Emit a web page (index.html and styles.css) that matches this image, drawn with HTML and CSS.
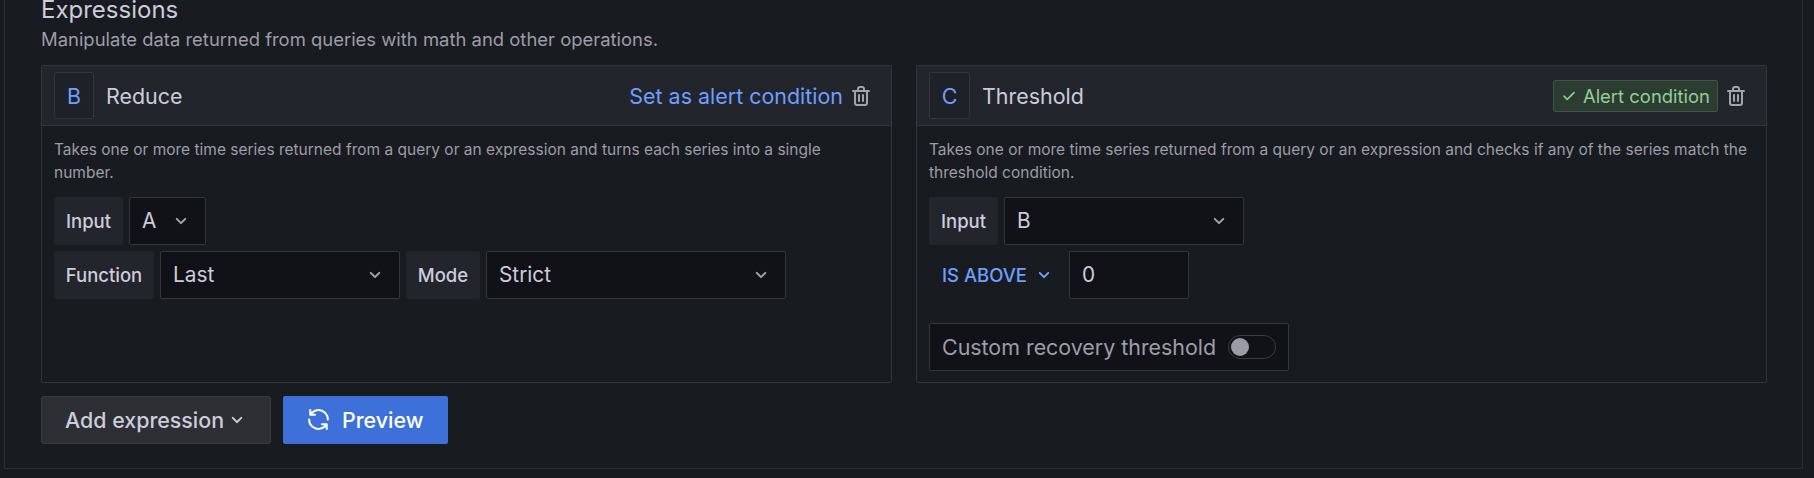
FILE: index.html
```html
<!DOCTYPE html>
<html lang="en">
<head>
<meta charset="utf-8">
<title>Expressions</title>
<link rel="stylesheet" href="styles.css">
</head>
<body>
<main class="section">
  <h2 class="title">Expressions</h2>
  <p class="subtitle">Manipulate data returned from queries with math and other operations.</p>
  <div class="cards">
    <section class="card">
      <header class="card-head">
        <span class="ref">B</span>
        <span class="name">Reduce</span>
        <span class="set-alert">Set as alert condition</span>
        <svg class="trash" viewBox="0 0 24 24"><path d="M10,18a1,1,0,0,0,1-1V11a1,1,0,0,0-2,0v6A1,1,0,0,0,10,18ZM20,6H16V5a3,3,0,0,0-3-3H11A3,3,0,0,0,8,5V6H4A1,1,0,0,0,4,8H5V19a3,3,0,0,0,3,3h8a3,3,0,0,0,3-3V8h1a1,1,0,0,0,0-2ZM10,5a1,1,0,0,1,1-1h2a1,1,0,0,1,1,1V6H10Zm7,14a1,1,0,0,1-1,1H8a1,1,0,0,1-1-1V8H17Zm-3-1a1,1,0,0,0,1-1V11a1,1,0,0,0-2,0v6A1,1,0,0,0,14,18Z"/></svg>
      </header>
      <div class="card-body">
        <p class="desc">Takes one or more time series returned from a query or an expression and turns each series into a single number.</p>
        <div class="row">
          <span class="label w-input">Input</span>
          <span class="select w-a">A<svg class="chev" viewBox="0 0 24 24"><path d="M17,9.17a1,1,0,0,0-1.41,0L12,12.71,8.46,9.17a1,1,0,0,0-1.41,0,1,1,0,0,0,0,1.42l4.24,4.24a1,1,0,0,0,1.42,0L17,10.59A1,1,0,0,0,17,9.17Z"/></svg></span>
        </div>
        <div class="row">
          <span class="label w-function">Function</span>
          <span class="select w-last">Last<svg class="chev" viewBox="0 0 24 24"><path d="M17,9.17a1,1,0,0,0-1.41,0L12,12.71,8.46,9.17a1,1,0,0,0-1.41,0,1,1,0,0,0,0,1.42l4.24,4.24a1,1,0,0,0,1.42,0L17,10.59A1,1,0,0,0,17,9.17Z"/></svg></span>
          <span class="label w-mode">Mode</span>
          <span class="select w-strict">Strict<svg class="chev" viewBox="0 0 24 24"><path d="M17,9.17a1,1,0,0,0-1.41,0L12,12.71,8.46,9.17a1,1,0,0,0-1.41,0,1,1,0,0,0,0,1.42l4.24,4.24a1,1,0,0,0,1.42,0L17,10.59A1,1,0,0,0,17,9.17Z"/></svg></span>
        </div>
      </div>
    </section>
    <section class="card">
      <header class="card-head">
        <span class="ref ref-wide">C</span>
        <span class="name">Threshold</span>
        <span class="badge"><svg class="check" viewBox="0 0 24 24"><path d="M18.71,7.21a1,1,0,0,0-1.42,0L9.84,14.67,6.71,11.53A1,1,0,1,0,5.29,13l3.84,3.84a1,1,0,0,0,1.42,0l8.16-8.16A1,1,0,0,0,18.71,7.21Z"/></svg>Alert condition</span>
        <svg class="trash" viewBox="0 0 24 24"><path d="M10,18a1,1,0,0,0,1-1V11a1,1,0,0,0-2,0v6A1,1,0,0,0,10,18ZM20,6H16V5a3,3,0,0,0-3-3H11A3,3,0,0,0,8,5V6H4A1,1,0,0,0,4,8H5V19a3,3,0,0,0,3,3h8a3,3,0,0,0,3-3V8h1a1,1,0,0,0,0-2ZM10,5a1,1,0,0,1,1-1h2a1,1,0,0,1,1,1V6H10Zm7,14a1,1,0,0,1-1,1H8a1,1,0,0,1-1-1V8H17Zm-3-1a1,1,0,0,0,1-1V11a1,1,0,0,0-2,0v6A1,1,0,0,0,14,18Z"/></svg>
      </header>
      <div class="card-body">
        <p class="desc">Takes one or more time series returned from a query or an expression and checks if any of the series match the threshold condition.</p>
        <div class="row">
          <span class="label w-input">Input</span>
          <span class="select w-b">B<svg class="chev" viewBox="0 0 24 24"><path d="M17,9.17a1,1,0,0,0-1.41,0L12,12.71,8.46,9.17a1,1,0,0,0-1.41,0,1,1,0,0,0,0,1.42l4.24,4.24a1,1,0,0,0,1.42,0L17,10.59A1,1,0,0,0,17,9.17Z"/></svg></span>
        </div>
        <div class="row">
          <span class="operator">IS ABOVE<svg class="chev chev-blue" viewBox="0 0 24 24"><path d="M17,9.17a1,1,0,0,0-1.41,0L12,12.71,8.46,9.17a1,1,0,0,0-1.41,0,1,1,0,0,0,0,1.42l4.24,4.24a1,1,0,0,0,1.42,0L17,10.59A1,1,0,0,0,17,9.17Z"/></svg></span>
          <span class="select w-num">0</span>
        </div>
        <div class="recovery">
          <span class="recovery-text">Custom recovery threshold</span>
          <span class="toggle"><span class="knob"></span></span>
        </div>
      </div>
    </section>
  </div>
  <div class="actions">
    <span class="btn btn-secondary">Add expression<svg class="chev chev-btn" viewBox="0 0 24 24"><path d="M17,9.17a1,1,0,0,0-1.41,0L12,12.71,8.46,9.17a1,1,0,0,0-1.41,0,1,1,0,0,0,0,1.42l4.24,4.24a1,1,0,0,0,1.42,0L17,10.59A1,1,0,0,0,17,9.17Z"/></svg></span>
    <span class="btn btn-primary"><svg class="sync" viewBox="0 0 24 24"><path d="M19.91,15.51H15.38a1,1,0,0,0,0,2h2.4A8,8,0,0,1,4,12a1,1,0,0,0-2,0,10,10,0,0,0,16.88,7.23V21a1,1,0,0,0,2,0V16.5A1,1,0,0,0,19.91,15.51ZM12,2A10,10,0,0,0,5.12,4.77V3a1,1,0,0,0-2,0V7.5a1,1,0,0,0,1,1h4.5a1,1,0,0,0,0-2H6.22A8,8,0,0,1,20,12a1,1,0,0,0,2,0A10,10,0,0,0,12,2Z"/></svg>Preview</span>
  </div>
</main>
</body>
</html>
```
FILE: styles.css
```css
* { box-sizing: border-box; }
html, body { margin: 0; height: 478px; overflow: hidden; }
body {
  background: #181b1f;
  color: #ccccdc;
  font-family: Inter, "Liberation Sans", sans-serif;
  font-size: 18.5px;
}
.section {
  margin-left: 4px;
  width: 1799px;
  height: 469px;
  padding: 0 0 0 36px;
  border: 1px solid #2c2f35;
  border-top: 0;
  border-radius: 0 0 2px 2px;
}
.title {
  margin: 0;
  font-size: 24px;
  font-weight: 400;
  line-height: 20px;
  height: 28px;
}
.subtitle {
  margin: 0;
  height: 37px;
  font-size: 18.45px;
  line-height: 22px;
  color: #9d9da8;
}
.cards { display: flex; gap: 24px; }
.card {
  width: 851px;
  height: 318px;
  border: 1px solid #33363c;
  border-radius: 2px;
}
.card-head {
  display: flex;
  align-items: center;
  height: 60px;
  padding: 0 12px;
  background: #22252b;
  border-bottom: 1px solid #33363c;
  font-size: 21.45px;
}
.ref {
  width: 40px;
  height: 47px;
  display: flex;
  align-items: center;
  justify-content: center;
  margin-right: 12px;
  border: 1px solid #33363c;
  border-radius: 2px;
  background: #1e2127;
  color: #6e9fff;
}
.ref-wide { width: 41px; }
.name { flex: 1; }
.set-alert { color: #6e9fff; }
.trash {
  width: 24px;
  height: 24px;
  margin: 0 6px;
  fill: #a3a3ae;
}
.badge {
  display: flex;
  align-items: center;
  height: 32px;
  padding: 0 7px 0 5px;
  border: 1px solid #3c5740;
  border-radius: 2px;
  background: #2d3c32;
  color: #8fd092;
  font-size: 18.45px;
}
.check {
  width: 20px;
  height: 20px;
  margin-right: 4px;
  fill: #8fd092;
}
.card-body { padding: 12px; }
.desc {
  margin: 0 0 13px;
  font-size: 15.5px;
  line-height: 23px;
  color: #9d9da8;
}
.row { display: flex; gap: 6px; margin-bottom: 6px; height: 48px; }
.label {
  display: flex;
  align-items: center;
  justify-content: center;
  padding-bottom: 1px;
  background: #22252b;
  border-radius: 2px;
  font-size: 18.5px;
  font-weight: 500;
}
.w-input { width: 69px; }
.w-function { width: 100px; }
.w-mode { width: 74px; }
.select {
  display: flex;
  align-items: center;
  justify-content: space-between;
  padding: 0 12px 1px;
  background: #111217;
  border: 1px solid #33363c;
  border-radius: 2px;
  font-size: 20.8px;
}
.w-a { width: 77px; }
.w-b { width: 240px; }
.w-last { width: 240px; }
.w-strict { width: 300px; }
.w-num { width: 120px; }
.chev {
  width: 24px;
  height: 24px;
  fill: #a3a3ae;
}
.operator {
  display: flex;
  align-items: center;
  width: 134px;
  padding: 0 0 1px 13px;
  color: #6e9fff;
  font-size: 18.5px;
  font-weight: 500;
}
.chev-blue { fill: #6e9fff; margin-left: 5px; }
.recovery {
  display: flex;
  align-items: center;
  width: 360px;
  height: 48px;
  margin-top: 24px;
  padding: 0 12px 1px;
  background: #111217;
  border: 1px solid #33363c;
  border-radius: 2px;
  color: #9d9da8;
  font-size: 21.4px;
}
.recovery-text { flex: 1; white-space: nowrap; }
.toggle {
  display: flex;
  flex: none;
  align-items: center;
  width: 48px;
  height: 24px;
  margin-left: 12px;
  padding-left: 2px;
  border: 1px solid #3a3d43;
  border-radius: 12px;
}
.knob { width: 18px; height: 18px; border-radius: 50%; background: #9b9ba6; }
.actions { display: flex; gap: 12px; margin-top: 13px; }
.btn {
  display: flex;
  align-items: center;
  height: 48px;
  padding-bottom: 1px;
  border-radius: 2px;
  font-size: 21.4px;
  font-weight: 500;
}
.btn-secondary {
  width: 230px;
  padding-left: 23px;
  background: #2d2f35;
  border: 1px solid #36393f;
  color: #ccccdc;
}
.chev-btn { margin-left: 1px; fill: #ccccdc; }
.btn-primary {
  width: 165px;
  padding-left: 23px;
  background: #3d71d9;
  color: #fff;
}
.sync {
  width: 25px;
  height: 25px;
  margin-right: 11px;
  fill: #fff;
}
```
